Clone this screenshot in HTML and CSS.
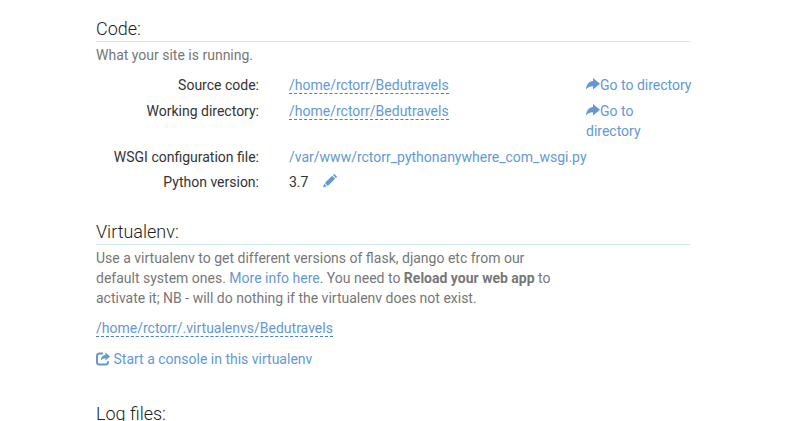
FILE: index.html
```html
<!DOCTYPE html>
<html lang="en">
<head>
<meta charset="utf-8">
<title>Web app configuration</title>
<link rel="stylesheet" href="styles.css">
</head>
<body>
<svg class="defs" aria-hidden="true">
  <symbol id="share" viewBox="0 0 14 14"><path d="M7 0L14 5.700 7 11.400V8.300C4 8.300 2 9 0 11.500C.3 6.400 3 3.200 7 2.900z"/></symbol>
</svg>
<main class="page">
  <section class="code">
    <h2>Code:</h2>
    <p class="help">What your site is running.</p>
    <dl class="settings">
      <div class="row"><dt>Source code:</dt><dd><a class="edit" href="#">/home/rctorr/Bedutravels</a></dd><dd class="go"><a href="#"><svg class="icon share"><use href="#share"/></svg>Go to directory</a></dd></div>
      <div class="row working"><dt>Working directory:</dt><dd><a class="edit" href="#">/home/rctorr/Bedutravels</a></dd><dd class="go narrow"><a href="#"><svg class="icon share"><use href="#share"/></svg>Go to directory</a></dd></div>
      <div class="row wsgi"><dt>WSGI configuration file:</dt><dd><a href="#">/var/www/rctorr_pythonanywhere_com_wsgi.py</a></dd></div>
      <div class="row"><dt>Python version:</dt><dd>3.7<a href="#"><svg class="icon pencil" viewBox="0 0 14 14"><path d="M0 13.500l1.200-3.700 2.500 2.500zM1.900 9l7.300-7.200 2.900 2.900-7.300 7.200zM9.900 1.100l.7-.7q.6-.6 1.200 0l1.800 1.800q.6.600 0 1.200l-.8.700z"/></svg></a></dd></div>
    </dl>
  </section>
  <section class="virtualenv">
    <h2>Virtualenv:</h2>
    <p class="help intro">Use a virtualenv to get different versions of flask, django etc from our default system ones. <a href="#">More info here</a>. You need to <b>Reload your web app</b> to activate it; NB - will do nothing if the virtualenv does not exist.</p>
    <p class="path"><a class="edit" href="#">/home/rctorr/.virtualenvs/Bedutravels</a></p>
    <p class="console"><a href="#"><svg class="icon export" viewBox="0 0 14 14"><path d="M7 1.500H3.500Q1 1.500 1 4v6q0 2.500 2.500 2.500h6q2.500 0 2.500-2.500V9.300" fill="none" stroke="currentColor" stroke-width="2"/><path d="M9.500 .6L14 4.500 9.500 8.400V6.200Q6.800 6.200 4.800 8.500Q5 3.600 9.500 2.800z"/></svg>Start a console in this virtualenv</a></p>
  </section>
  <section class="logs"><h2>Log files:</h2></section>
</main>
</body>
</html>
```
FILE: styles.css
```css
* { box-sizing: border-box; }
body { margin: 0; height: 421px; overflow: hidden; background: #fff; color: #333; font: 14px/20px Roboto, sans-serif; }
.defs { position: absolute; width: 0; height: 0; }
.page { width: 594px; margin-left: 96px; padding-top: 18px; }
h2 { margin: 0; height: 24px; border-bottom: 1px solid #d0e6f5; font-size: 18px; line-height: 21px; font-weight: 300; color: #222; }
p, dl, dd { margin: 0; }
a { color: #6399d3; text-decoration: none; }
.edit { border-bottom: 1px dashed #4a7fc0; }
.help { color: #777; }
.code .help { padding-top: 3px; }
.settings { padding-top: 10px; }
.row { display: grid; grid-template-columns: 163px 297px 106px; padding-bottom: 6px; }
.row dt { text-align: right; }
.row dd:nth-child(2) { padding-left: 30px; white-space: nowrap; }
.row .go { margin-left: 30px; white-space: nowrap; }
.row .narrow { width: 90px; white-space: normal; }
.row.wsgi { padding-bottom: 5px; }
.icon { width: 14px; height: 14px; fill: currentColor; vertical-align: -2px; }
.pencil { margin-left: 14.500px; vertical-align: -1px; }
.virtualenv { padding-top: 23px; }
.intro { width: 460px; padding-top: 3px; }
.path { padding-top: 10px; }
.console { padding-top: 11px; }
.export { margin-right: 3.500px; }
.logs { padding-top: 34px; }
```
